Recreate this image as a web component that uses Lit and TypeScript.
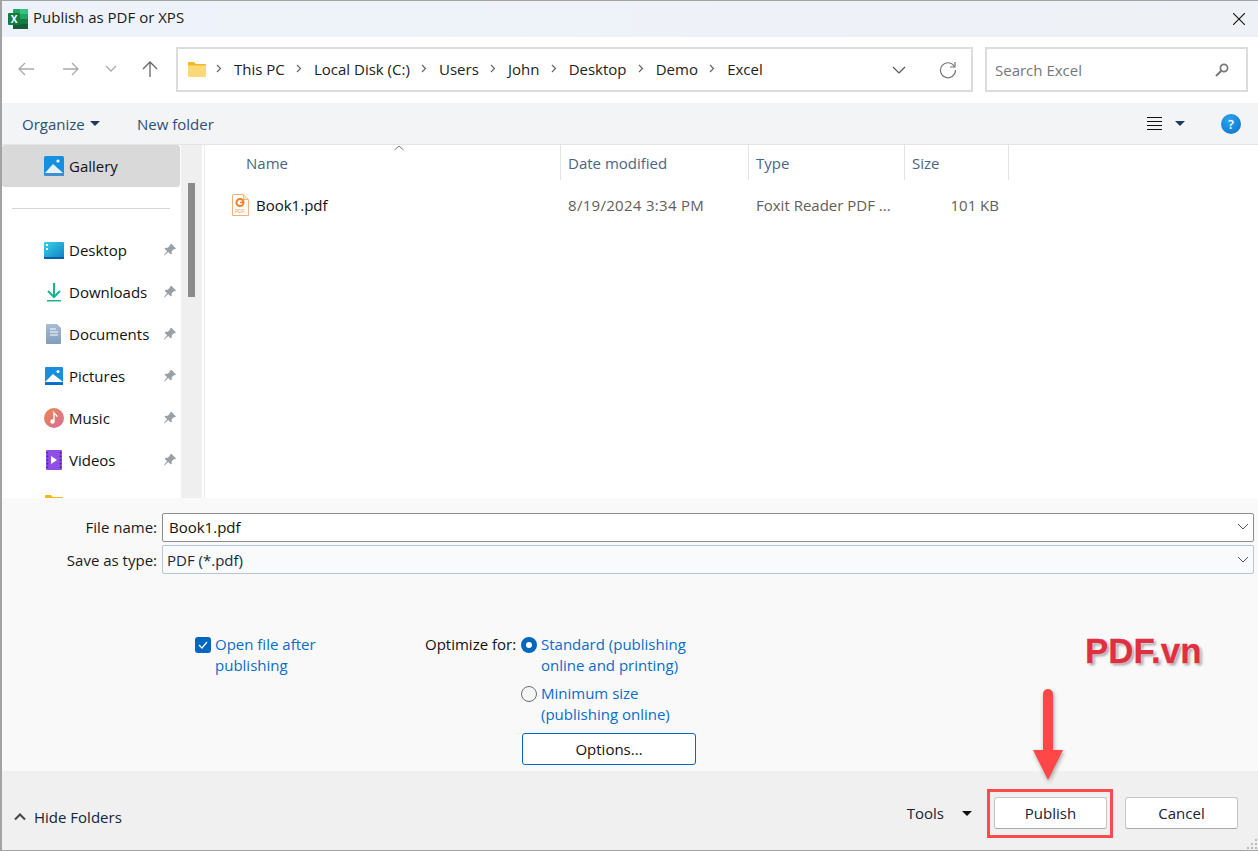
import { LitElement, html, css } from "lit";
import { customElement } from "lit/decorators.js";

const pin = html`<svg class="pin" width="14" height="14" viewBox="0 0 14 14"><path d="M8.600 1 13 5.400l-1 .9-.8-.3-2.500 2.300.1 2.200-1 1-2.600-2.600L1.500 12.600 1 12l3.100-3.700L1.600 5.700l1-1 2.200.1L7 2.400 6.800 1.600z" fill="#9aa0a6"/></svg>`;

const folder = html`<svg width="18" height="15" viewBox="0 0 18 15"><path d="M0 1.200C0 .5.5 0 1.200 0h4.600l2 2H17c.6 0 1 .4 1 1v2H0z" fill="#f5b81f"/><path d="M0 3.500h18v10.300c0 .7-.5 1.200-1.200 1.200H1.200C.5 15 0 14.500 0 13.800z" fill="#fcd978"/></svg>`;

const navIcons: Record<string, unknown> = {
  Desktop: html`<svg width="20" height="17" viewBox="0 0 20 17"><defs><linearGradient id="dk" x1="0" y1="0" x2="1" y2="1"><stop offset="0" stop-color="#3fd0e6"/><stop offset="1" stop-color="#0b84c8"/></linearGradient></defs><rect width="20" height="16" rx="1" fill="url(#dk)"/><rect y="15" width="20" height="2" fill="#0a5fa8"/><rect x="2" y="2" width="2" height="2" fill="#fff"/><rect x="2" y="6" width="2" height="2" fill="#fff"/></svg>`,
  Downloads: html`<svg width="20" height="20" viewBox="0 0 20 20"><path d="M10 1v13M4 9l6 6 6-6" fill="none" stroke="#17b58f" stroke-width="2"/><rect x="3" y="18" width="14" height="1.500" fill="#17b58f"/></svg>`,
  Documents: html`<svg width="16" height="20" viewBox="0 0 16 20"><defs><linearGradient id="dc" x1="0" y1="0" x2="0" y2="1"><stop offset="0" stop-color="#a9bdd4"/><stop offset="1" stop-color="#7f9dbd"/></linearGradient></defs><path d="M1 0h10l4 4v15a1 1 0 0 1-1 1H1a1 1 0 0 1-1-1V1a1 1 0 0 1 1-1z" fill="url(#dc)"/><path d="M4 5h6M4 8h8M4 11h8" stroke="#fff" stroke-width="1"/></svg>`,
  Pictures: html`<svg width="18" height="18" viewBox="0 0 18 18"><rect width="18" height="18" rx="1" fill="#1590e0"/><circle cx="13" cy="4.500" r="1.500" fill="#fff"/><path d="M0 15l8-8 10 8z" fill="#fff"/><rect y="15.500" width="18" height="2.500" fill="#0a6cc4"/></svg>`,
  Music: html`<svg width="20" height="20" viewBox="0 0 20 20"><defs><linearGradient id="mu" x1="0" y1="0" x2="1" y2="1"><stop offset="0" stop-color="#e8894c"/><stop offset="1" stop-color="#d96c9a"/></linearGradient></defs><circle cx="10" cy="10" r="10" fill="url(#mu)"/><circle cx="8.500" cy="13.500" r="2.200" fill="#fff"/><path d="M10 13.500V5c1 1.800 3 1.600 3 3.800" fill="none" stroke="#fff" stroke-width="1.400"/></svg>`,
  Videos: html`<svg width="16" height="20" viewBox="0 0 16 20"><rect width="16" height="20" rx="1" fill="#8f4fe8"/><path d="M5 6l6 4-6 4z" fill="#fff"/><path d="M1.500 2v16M14.500 2v16" stroke="#4a1f9c" stroke-width="1.600" stroke-dasharray="1.600 2"/></svg>`,
};

const crumbs = ["This PC", "Local Disk (C:)", "Users", "John", "Desktop", "Demo", "Excel"];
const places = ["Desktop", "Downloads", "Documents", "Pictures", "Music", "Videos"];

const caret = () => html`<svg width="10" height="5" viewBox="0 0 10 5"><path d="M0 0h10L5 5z" fill="currentColor"/></svg>`;
const combo = html`<svg width="12" height="7" viewBox="0 0 12 7"><path d="M1 1l5 5 5-5" fill="none" stroke="#555" stroke-width="1"/></svg>`;

@customElement("app-root")
export class AppRoot extends LitElement {
  static styles = css`
    :host { display: block; width: 1258px; height: 851px; font: 15px "Open Sans", "Noto Sans", sans-serif; color: #111; }
    * { box-sizing: border-box; }
    .win { position: relative; width: 1258px; height: 851px; display: flex; flex-direction: column; border: 1px solid #a3a3a3; border-left-width: 2px; border-right-width: 0; overflow: hidden; background: #fff; }
    .title { height: 36px; flex: none; display: flex; align-items: center; background: linear-gradient(90deg, #eef2fa, #eef2f7); padding: 0 13px 0 6px; }
    .title .t { margin: 0 0 5px 5px; color: #1a1a1a; flex: 1; }
    .nav { height: 66px; flex: none; display: flex; align-items: center; padding: 0 0 1px 16px; background: #fff; }
    .navbtn { display: flex; justify-content: center; flex: none; margin-bottom: 2px; }
    .addr { width: 797px; height: 45px; margin-left: 18px; border: 2px solid #dcdcdc; display: flex; align-items: center; padding-left: 10px; flex: none; }
    .crumbs { display: flex; align-items: center; margin-left: 10px; flex: 1; color: #222; padding-bottom: 2px; }
    .crumb { display: flex; align-items: center; gap: 12px; margin-right: 11.2px; }
    .addr .r { display: flex; align-items: center; gap: 33px; margin-right: 14px; }
    .search { width: 263px; height: 45px; margin-left: 12px; border: 2px solid #dcdcdc; display: flex; align-items: center; justify-content: space-between; padding: 0 17px 0 8px; color: #777; flex: none; }
    .tools { height: 42px; flex: none; background: #f3f4f6; border-bottom: 1px solid #e4e4e4; display: flex; align-items: center; padding: 0 7px 0 20px; color: #2b4f77; }
    .tools .org { display: flex; align-items: center; gap: 5px; width: 115px; }
    .tools .org svg { color: #1f3a5f; }
    .tools .sp { flex: 1; }
    .tools .view { display: flex; align-items: center; gap: 13px; margin-right: 36px; color: #1f3a5f; }
    .help { width: 20px; height: 20px; border-radius: 50%; background: radial-gradient(circle at 40% 30%, #2ea4ee, #0a6fc4); color: #fff; font-size: 13px; font-weight: 600; display: flex; align-items: center; justify-content: center; margin-right: 10px; }
    .main { height: 353px; flex: none; display: flex; overflow: hidden; background: #fff; }
    .side { width: 178px; flex: none; overflow: hidden; margin-right: 1px; }
    .row { height: 42px; display: flex; align-items: center; color: #111; position: relative; border-radius: 3px; }
    .row .ic { width: 20px; margin-left: 42px; display: flex; justify-content: center; flex: none; }
    .row .lb { margin-left: 5px; flex: 1; }
    .row.sel { background: #d9d9d9; }
    .pin { position: absolute; left: 161px; top: 14px; }
    .sep { height: 1px; margin: 21px 10px 20px; background: #d6d6d6; }
    .track { width: 21px; flex: none; background: #efefef; padding: 38px 7px 0; }
    .thumb { width: 7px; height: 114px; background: #8a8a8a; }
    .list { flex: 1; margin-left: 2px; border-left: 1px solid #ececec; min-width: 0; }
    .cols { display: flex; height: 35px; align-items: center; color: #4a6583; }
    .col { height: 100%; display: flex; align-items: center; border-right: 1px solid #e3e3e3; padding-left: 7px; position: relative; flex: none; }
    .sort { position: absolute; left: 189px; top: 0; }
    .file { display: flex; align-items: center; height: 22px; margin-top: 14px; }
    .file .c { flex: none; padding-left: 7px; color: #5e5e5e; white-space: nowrap; }
    .file .d { letter-spacing: .3px; }
    .file .n { flex: none; width: 356px; padding-left: 27px; display: flex; align-items: center; gap: 7px; color: #111; }
    .form { height: 273px; flex: none; background: #f9f9f9; padding: 15px 4px 0 0; }
    .fr { display: flex; align-items: center; margin-bottom: 3px; }
    .fr label { width: 155px; text-align: right; flex: none; color: #1a1a1a; }
    .fr.a label { padding-bottom: 2px; }
    .fr.a .inp { padding-bottom: 2px; }
    .inp { margin-left: 5px; flex: 1; height: 29px; display: flex; align-items: center; justify-content: space-between; padding: 0 4px 0 6px; border: 1px solid #8c8c8c; border-radius: 2px; background: #fff; }
    .inp.ty { background: #f8fafc; border-color: #b7c6d2; padding-left: 4px; color: #1a2a3a; }
    .opts { display: flex; padding: 57px 0 0 193px; color: #0a6ccb; line-height: 21px; }
    .ck { flex: none; width: 230px; display: flex; align-items: flex-start; gap: 4px; }
    .box { width: 16px; height: 16px; margin-top: 3px; border-radius: 3px; background: #0067c0; display: flex; align-items: center; justify-content: center; flex: none; }
    .opt { color: #111; flex: none; width: 96px; }
    .radios { display: flex; flex-direction: column; flex: none; }
    .rad { display: flex; gap: 4px; margin-bottom: 7px; }
    .dot { width: 16px; height: 16px; margin-top: 3px; border-radius: 50%; flex: none; }
    .dot.on { border: 5px solid #0067c0; background: #fff; }
    .dot.off { border: 1px solid #6e6e6e; background: #f6f6f6; }
    .optsbtn { width: 174px; height: 32px; margin: 1px 0 0 1px; border: 1px solid #0067c0; border-radius: 3px; background: #fff; color: #111; display: flex; align-items: center; justify-content: center; }
    .foot { flex: 1; background: #f0f0f0; display: flex; align-items: flex-start; position: relative; padding: 26px 20px 0 12px; }
    .hide { display: flex; align-items: center; gap: 8px; margin-top: 10px; color: #14233a; }
    .sp { flex: 1; }
    .tl { display: flex; align-items: center; gap: 18px; height: 32px; margin-right: 22px; color: #14233a; }
    .tl svg { color: #111; }
    .btn { width: 113px; height: 32px; background: #fff; border: 1px solid #c6c6c6; border-bottom-color: #a8a8a8; border-radius: 3px; display: flex; align-items: center; justify-content: center; color: #14233a; }
    .btn + .btn { margin-left: 18px; }
    .grip { position: absolute; right: 0; bottom: 0; }
    .mark { position: absolute; left: 1083px; top: 630px; font: bold 35px "Liberation Sans", Arial, sans-serif; color: #e0303f; -webkit-text-stroke: .3px #e0303f; text-shadow: 0 0 2px #fff, 0 0 2px #fff, 2px 2px 3px rgba(0,0,0,.4); }
    .arrow { position: absolute; left: 1024px; top: 688px; filter: drop-shadow(1px 2px 2px rgba(0,0,0,.35)); }
    .hl { position: absolute; left: 985px; top: 788px; width: 126px; height: 49px; border: 3px solid #ff4b4b; }
  `;

  render() {
    return html`<div class="win">
      <div class="title">
        <svg width="20" height="20" viewBox="0 0 20 20"><rect x="5" y="0" width="15" height="20" rx="1" fill="#21a366"/><rect x="12" y="0" width="8" height="5" fill="#33c481"/><rect x="5" y="10" width="15" height="5" fill="#107c41"/><rect x="12" y="5" width="8" height="5" fill="#21a366"/><rect x="5" y="15" width="15" height="5" fill="#185c37"/><rect x="0" y="4" width="12" height="12" rx="1" fill="#107c41"/><text x="2.800" y="13.800" font-size="10" font-weight="700" font-family="Open Sans" fill="#fff">X</text></svg>
        <span class="t">Publish as PDF or XPS</span>
        <svg width="12" height="12" viewBox="0 0 12 12"><path d="M0 0l12 12M12 0L0 12" stroke="#111" stroke-width="1.100"/></svg>
      </div>
      <div class="nav">
        <div class="navbtn" style="width:16px"><svg width="16" height="14" viewBox="0 0 16 14"><path d="M16 7H1M7 1 1 7l6 6" fill="none" stroke="#aaa" stroke-width="1.300"/></svg></div>
        <div class="navbtn" style="width:16px;margin-left:29px"><svg width="16" height="14" viewBox="0 0 16 14"><path d="M0 7h15M9 1l6 6-6 6" fill="none" stroke="#aaa" stroke-width="1.300"/></svg></div>
        <div class="navbtn" style="width:12px;margin-left:26px"><svg width="12" height="7" viewBox="0 0 12 7"><path d="M1 1l5 5 5-5" fill="none" stroke="#aaa" stroke-width="1.300"/></svg></div>
        <div class="navbtn" style="width:16px;margin-left:25px"><svg width="16" height="16" viewBox="0 0 16 16"><path d="M8 16V1M1 8l7-7 7 7" fill="none" stroke="#666" stroke-width="1.300"/></svg></div>
        <div class="addr">
          ${folder}
          <div class="crumbs">${crumbs.map(
            (c) => html`<span class="crumb"><svg width="6" height="9" viewBox="0 0 6 9"><path d="M1 1l3.500 3.500L1 8" fill="none" stroke="#666" stroke-width="1.200"/></svg><span>${c}</span></span>`
          )}</div>
          <div class="r">
            <svg width="14" height="8" viewBox="0 0 14 8"><path d="M1 1l6 6 6-6" fill="none" stroke="#555" stroke-width="1.200"/></svg>
            <svg width="18" height="18" viewBox="0 0 18 18"><path d="M15.500 5.500A7.500 7.500 0 1 0 16.500 9" fill="none" stroke="#777" stroke-width="1.200"/><path d="M16 1v5h-5" fill="none" stroke="#777" stroke-width="1.200"/></svg>
          </div>
        </div>
        <div class="search"><span>Search Excel</span><svg width="14" height="14" viewBox="0 0 14 14"><circle cx="9" cy="5" r="3.600" fill="none" stroke="#777" stroke-width="1.700"/><path d="M6.300 7.700 1 13" stroke="#777" stroke-width="2"/></svg></div>
      </div>
      <div class="tools">
        <div class="org"><span>Organize</span>${caret()}</div>
        <span>New folder</span>
        <span class="sp"></span>
        <div class="view"><svg width="15" height="15" viewBox="0 0 15 15"><path d="M0 1.500h15M0 5.500h15M0 9.500h15M0 13.500h15" stroke="#111" stroke-width="1"/></svg>${caret()}</div>
        <div class="help">?</div>
      </div>
      <div class="main">
        <div class="side">
          <div class="row sel"><span class="ic"><svg width="20" height="20" viewBox="0 0 20 20"><rect width="20" height="20" rx="1.500" fill="#1590e0"/><circle cx="14" cy="5" r="1.600" fill="#fff"/><path d="M1 17l8-9 10 9z" fill="#e6f3fc"/><rect x="1" y="17" width="19" height="3" fill="#3f8fd0"/></svg></span><span class="lb">Gallery</span></div>
          <div class="sep"></div>
          ${places.map(
            (p) => html`<div class="row"><span class="ic">${navIcons[p]}</span><span class="lb">${p}</span>${pin}</div>`
          )}
          <div class="row"><span class="ic">${folder}</span><span class="lb">PDF</span></div>
        </div>
        <div class="track"><div class="thumb"></div></div>
        <div class="list">
          <div class="cols">
            <div class="col" style="width:356px;padding-left:41px">Name
              <svg class="sort" width="10" height="6" viewBox="0 0 10 6"><path d="M.5 5 5 1l4.500 4" fill="none" stroke="#777" stroke-width="1"/></svg>
            </div>
            <div class="col" style="width:188px">Date modified</div>
            <div class="col" style="width:156px">Type</div>
            <div class="col" style="width:104px">Size</div>
          </div>
          <div class="file">
            <div class="n">
              <svg width="17" height="22" viewBox="0 0 17 22"><path d="M1 .5h10.500l5 5v16H.5V1z" fill="#fff" stroke="#f3b27a"/><path d="M11.500.5v5h5" fill="#fde6cf" stroke="#f3b27a"/><circle cx="8" cy="8.500" r="3.500" fill="none" stroke="#ee7f22" stroke-width="2"/><path d="M8 8.500h3.500" stroke="#ee7f22" stroke-width="1.500"/><text x="3" y="19" font-size="5" font-family="Liberation Sans" fill="#f0a060">PDF</text></svg>
              <span>Book1.pdf</span>
            </div>
            <div class="c d" style="width:188px">8/19/2024 3:34 PM</div>
            <div class="c" style="width:156px">Foxit Reader PDF ...</div>
            <div class="c" style="width:94px;text-align:right;padding:0">101 KB</div>
          </div>
        </div>
      </div>
      <div class="form">
        <div class="fr a"><label>File name:</label><div class="inp"><span>Book1.pdf</span>${combo}</div></div>
        <div class="fr"><label>Save as type:</label><div class="inp ty"><span>PDF (*.pdf)</span>${combo}</div></div>
        <div class="opts">
          <div class="ck">
            <span class="box"><svg width="10" height="8" viewBox="0 0 10 8"><path d="M1 4l3 3 5-6" fill="none" stroke="#fff" stroke-width="1.300"/></svg></span>
            <span>Open file after<br />publishing</span>
          </div>
          <div class="opt">Optimize for:</div>
          <div class="radios">
            <div class="rad"><span class="dot on"></span><span>Standard (publishing<br />online and printing)</span></div>
            <div class="rad"><span class="dot off"></span><span>Minimum size<br />(publishing online)</span></div>
            <div class="optsbtn">Options...</div>
          </div>
        </div>
      </div>
      <div class="foot">
        <div class="hide"><svg width="12" height="8" viewBox="0 0 12 8"><path d="M1 6.500l5-5 5 5" fill="none" stroke="#444" stroke-width="2"/></svg><span>Hide Folders</span></div>
        <span class="sp"></span>
        <div class="tl"><span>Tools</span>${caret()}</div>
        <div class="btn">Publish</div>
        <div class="btn">Cancel</div>
        <svg class="grip" width="12" height="12" viewBox="0 0 12 12" fill="#bbb"><rect x="9" y="1" width="2" height="2"/><rect x="5" y="5" width="2" height="2"/><rect x="9" y="5" width="2" height="2"/><rect x="1" y="9" width="2" height="2"/><rect x="5" y="9" width="2" height="2"/><rect x="9" y="9" width="2" height="2"/></svg>
      </div>
      <div class="mark">PDF.vn</div>
      <svg class="arrow" width="44" height="96" viewBox="0 0 44 96"><path d="M22 5v60" stroke="#ff4747" stroke-width="10" stroke-linecap="round"/><path d="M7 61h30L22 91z" fill="#ff4747"/></svg>
      <div class="hl"></div>
    </div>`;
  }
}
